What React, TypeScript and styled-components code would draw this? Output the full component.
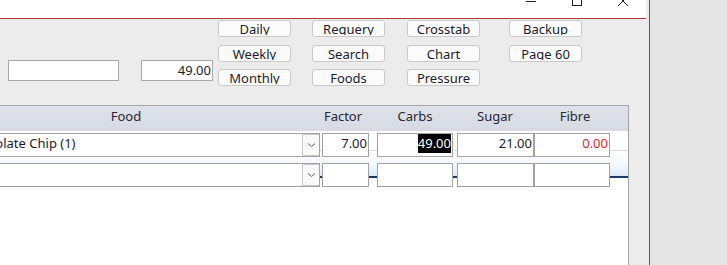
import React from 'react'
import styled, { createGlobalStyle } from 'styled-components'

const GlobalStyle = createGlobalStyle`
  html, body {
    margin: 0;
    padding: 0;
    background: #e5e5e5;
  }
  body {
    font-family: 'Noto Sans', 'Open Sans', sans-serif;
    font-size: 13px;
    color: #1b1b2f;
  }
`

const Screen = styled.div`
  display: flex;
  width: 727px;
  height: 265px;
  overflow: hidden;
`

const Window = styled.div`
  display: flex;
  flex-direction: column;
  width: 649px;
  height: 265px;
  background: #ececec;
  border-right: 1px solid #b3383b;
  overflow: hidden;
`

const Desk = styled.div`
  flex: 1;
  background: #e5e5e5;
`

const TitleBar = styled.div`
  display: flex;
  justify-content: flex-end;
  height: 18px;
  margin-right: 3px;
  background: #ffffff;
  border-bottom: 1px solid #b3383b;
`

const Caption = styled.svg`
  display: block;
  width: 46px;
  height: 18px;
`

const Controls = styled.div`
  display: flex;
  align-items: flex-start;
  height: 86px;
  padding-left: 8px;
`

const TextBox = styled.div<{ $width: number; $gap?: number }>`
  box-sizing: border-box;
  width: ${(p) => p.$width}px;
  height: 21px;
  margin-top: 41px;
  margin-left: ${(p) => p.$gap ?? 0}px;
  padding: 0 1px;
  background: #ffffff;
  border: 1px solid #a9a9a9;
  text-align: right;
  line-height: 18px;
`

const ButtonStack = styled.div<{ $gap: number }>`
  display: flex;
  flex-direction: column;
  gap: 7px;
  margin-top: 1px;
  margin-left: ${(p) => p.$gap}px;

  & > button:first-child {
    margin-bottom: 1px;
  }
`

const Button = styled.button`
  box-sizing: border-box;
  width: 73px;
  height: 17px;
  padding: 0;
  background: #fbfbfb;
  border: 1px solid #c9c9c9;
  border-radius: 3px;
  font-family: inherit;
  font-size: 13px;
  color: #1b1b2f;
`

// Access clips the caption at the baseline, so descenders are cut off
const ButtonLabel = styled.span`
  display: block;
  height: 13px;
  line-height: 15px;
  overflow: hidden;
`

const Subform = styled.div`
  display: flex;
  flex-direction: column;
  flex: 1;
  box-sizing: border-box;
  width: 699px;
  margin-left: -70px;
  padding-left: 3px;
  background: #ffffff;
  border-top: 1px solid #a3a3a3;
  border-right: 1px solid #a3a3a3;
`

const HeaderRow = styled.div`
  display: grid;
  grid-template-columns: 386px 48px 96px 64px 96px;
  height: 25px;
  margin-left: -3px;
  padding-left: 3px;
  background: linear-gradient(#dfe2e9, #d6dae2);
`

const HeaderCell = styled.div`
  text-align: center;
  line-height: 20px;
  color: #262636;
`

const Body = styled.div`
  position: relative;
  flex: 1;
  padding-top: 2px;
`

const CurrentBand = styled.div`
  position: absolute;
  top: 19px;
  left: -3px;
  right: 0;
  height: 25px;
  border-top: 1px solid #d9d9d9;
  border-bottom: 2px solid #1d3b68;
  background: linear-gradient(#fdfeff, #f3f8fd 55%, #dce9f7);
`

const Row = styled.div`
  position: relative;
  display: flex;
  height: 24px;
  margin-bottom: 6px;
`

const Field = styled.div<{ $width: number; $gap?: number; $color?: string }>`
  box-sizing: border-box;
  width: ${(p) => p.$width}px;
  height: 24px;
  margin-left: ${(p) => p.$gap ?? 0}px;
  padding: 0 1px 0 0;
  background: #ffffff;
  border: 1px solid #a3a3a3;
  text-align: right;
  line-height: 19px;
  color: ${(p) => p.$color ?? '#1b1b2f'};
  white-space: nowrap;
`

const Selected = styled.span`
  display: inline-block;
  background: #000000;
  color: #ffffff;
  line-height: 19px;
`

const Combo = styled.div`
  display: flex;
  box-sizing: border-box;
  width: 387px;
  height: 24px;
  background: #ffffff;
  border: 1px solid #a3a3a3;
`

const ComboText = styled.div<{ $indent: number }>`
  flex: 1;
  padding-left: ${(p) => p.$indent}px;
  line-height: 19px;
  white-space: nowrap;
  overflow: hidden;
`

const DropButton = styled.div`
  display: flex;
  align-items: center;
  justify-content: center;
  box-sizing: border-box;
  width: 17px;
  height: 22px;
  background: #f9f9f9;
  border: 1px solid #c9c9c9;
  border-right: none;
`

const Chevron = () => (
  <svg width="9" height="6" viewBox="0 0 9 6">
    <path d="M1 1.5 L4.5 4.5 L8 1.5" fill="none" stroke="#666" strokeWidth="1" />
  </svg>
)

const columns = [
  ['Daily', 'Weekly', 'Monthly'],
  ['Requery', 'Search', 'Foods'],
  ['Crosstab', 'Chart', 'Pressure'],
  ['Backup', 'Page 60'],
]
const columnGaps = [5, 21, 22, 29]

const headers = ['Food', 'Factor', 'Carbs', 'Sugar', 'Fibre']

const App = () => {
  return (
    <Screen>
      <GlobalStyle />
      <Window>
        <TitleBar>
          <Caption viewBox="0 0 46 18">
            <path d="M18 1.5 H28" stroke="#222" strokeWidth="1" />
          </Caption>
          <Caption viewBox="0 0 46 18">
            <rect x="18.5" y="-4.5" width="9" height="10" fill="none" stroke="#222" strokeWidth="1" />
          </Caption>
          <Caption viewBox="0 0 46 18">
            <path d="M18 -4 L28 6 M28 -4 L18 6" stroke="#222" strokeWidth="1" />
          </Caption>
        </TitleBar>

        <Controls>
          <TextBox $width={111} />
          <TextBox $width={72} $gap={22}>
            49.00
          </TextBox>
          {columns.map((labels, i) => (
            <ButtonStack key={i} $gap={columnGaps[i]}>
              {labels.map((label) => (
                <Button key={label}>
                  <ButtonLabel>{label}</ButtonLabel>
                </Button>
              ))}
            </ButtonStack>
          ))}
        </Controls>

        <Subform>
          <HeaderRow>
            {headers.map((h) => (
              <HeaderCell key={h}>{h}</HeaderCell>
            ))}
          </HeaderRow>

          <Body>
            <CurrentBand />
            <Row>
              <Combo>
                <ComboText $indent={31}>Chocolate Chip (1)</ComboText>
                <DropButton>
                  <Chevron />
                </DropButton>
              </Combo>
              <Field $width={47} $gap={2}>
                7.00
              </Field>
              <Field $width={76} $gap={8}>
                <Selected>49.00</Selected>
              </Field>
              <Field $width={77} $gap={4}>
                21.00
              </Field>
              <Field $width={76} $color="#f01c24">
                0.00
              </Field>
            </Row>
            <Row>
              <Combo>
                <ComboText $indent={31} />
                <DropButton>
                  <Chevron />
                </DropButton>
              </Combo>
              <Field $width={47} $gap={2} />
              <Field $width={76} $gap={8} />
              <Field $width={77} $gap={4} />
              <Field $width={76} />
            </Row>
          </Body>
        </Subform>
      </Window>
      <Desk />
    </Screen>
  )
}

export default App
